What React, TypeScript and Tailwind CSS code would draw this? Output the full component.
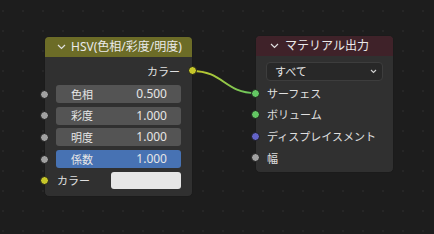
import React from "react";

type Socket = { color: string };

const Dot = ({ color, className = "" }: Socket & { className?: string }) => (
  <span
    className={`absolute w-[9px] h-[9px] rounded-full border border-[#1a1a1a] ${className}`}
    style={{ backgroundColor: color }}
  />
);

const Chevron = () => (
  <svg width="9" height="6" viewBox="0 0 9 6" className="shrink-0">
    <path d="M1 1 L4.5 4.5 L8 1" fill="none" stroke="#e0e0e0" strokeWidth="1.2" />
  </svg>
);

const fields = [
  { label: "色相", value: "0.500", active: false },
  { label: "彩度", value: "1.000", active: false },
  { label: "明度", value: "1.000", active: false },
  { label: "係数", value: "1.000", active: true },
];

const outputs = [
  { label: "サーフェス", color: "#63c763" },
  { label: "ボリューム", color: "#63c763" },
  { label: "ディスプレイスメント", color: "#6363c7" },
  { label: "幅", color: "#a1a1a1" },
];

const HsvNode = () => (
  <div className="absolute left-[44px] top-[36px] w-[149px] h-[161px] rounded-[5px] bg-[#303030] border border-[#1b1b1b]">
    <div className="h-[20px] flex items-center gap-[5px] pl-[12px] rounded-t-[4px] bg-[#6c6c27] text-[12px] text-[#eaeaea]">
      <Chevron />
      <span>HSV(色相/彩度/明度)</span>
    </div>
    <div className="relative h-[26px] flex items-center justify-end pr-[12px] mt-[1px] text-[#e0e0e0]">
      <span>カラー</span>
      <Dot color="#c7c729" className="right-[-5px] top-[8px]" />
    </div>
    <div className="flex flex-col gap-[3.7px] mt-[1px]">
      {fields.map((f) => (
        <div key={f.label} className="relative h-[18px] px-[11px]">
          <Dot color="#a1a1a1" className="left-[-5px] top-[4.5px]" />
          <div
            className={`h-full rounded-[3px] flex items-center justify-between pl-[15px] pr-[14px] text-[#e6e6e6] ${
              f.active ? "bg-[#4772b3]" : "bg-[#545454]"
            }`}
          >
            <span>{f.label}</span>
            <span className="text-[12px]">{f.value}</span>
          </div>
        </div>
      ))}
      <div className="relative h-[17px] flex items-center pl-[12px] pr-[11px] justify-between text-[#e0e0e0]">
        <Dot color="#c7c729" className="left-[-5px] top-[4px]" />
        <span>カラー</span>
        <div className="w-[70px] h-full rounded-[3px] bg-[#e6e6e6]" />
      </div>
    </div>
  </div>
);

const OutputNode = () => (
  <div className="absolute left-[255px] top-[35px] w-[139px] h-[138px] rounded-[5px] bg-[#303030] border border-[#1b1b1b]">
    <div className="h-[20px] flex items-center gap-[6px] pl-[14px] rounded-t-[4px] bg-[#3f2229] text-[12px] text-[#eaeaea]">
      <Chevron />
      <span>マテリアル出力</span>
    </div>
    <div className="mx-[10px] mt-[6px] h-[19px] rounded-[4px] border border-[#3d3d3d] bg-[#282828] flex items-center justify-between pl-[8px] pr-[5px] text-[#e6e6e6]">
      <span>すべて</span>
      <svg width="7" height="5" viewBox="0 0 7 5">
        <path d="M1 1 L3.5 3.5 L6 1" fill="none" stroke="#d0d0d0" strokeWidth="1.1" />
      </svg>
    </div>
    <div className="flex flex-col mt-[1.5px]">
      {outputs.map((o) => (
        <div key={o.label} className="relative h-[21.6px] flex items-center pl-[11px] text-[#e0e0e0]">
          <Dot color={o.color} className="left-[-5px] top-[6px]" />
          <span>{o.label}</span>
        </div>
      ))}
    </div>
  </div>
);

export default function App() {
  return (
    <div
      className="relative w-[434px] h-[234px] overflow-hidden bg-[#1d1d1d] bg-[radial-gradient(circle,#262626_0.8px,transparent_1px)] bg-[size:20px_20px] bg-[position:-7px_1px] text-[11px] leading-none"
      style={{ fontFamily: '"Noto Sans", "Noto Sans CJK JP", sans-serif' }}
    >
      <svg className="absolute left-0 top-0" width="434" height="234">
        <defs>
          <linearGradient id="wire" x1="192" y1="0" x2="256" y2="0" gradientUnits="userSpaceOnUse">
            <stop offset="0" stopColor="#c7c729" />
            <stop offset="1" stopColor="#63c763" />
          </linearGradient>
        </defs>
        <path d="M192 71 C224 71 224 93 256 93" fill="none" stroke="url(#wire)" strokeWidth="2" />
      </svg>
      <HsvNode />
      <OutputNode />
    </div>
  );
}
